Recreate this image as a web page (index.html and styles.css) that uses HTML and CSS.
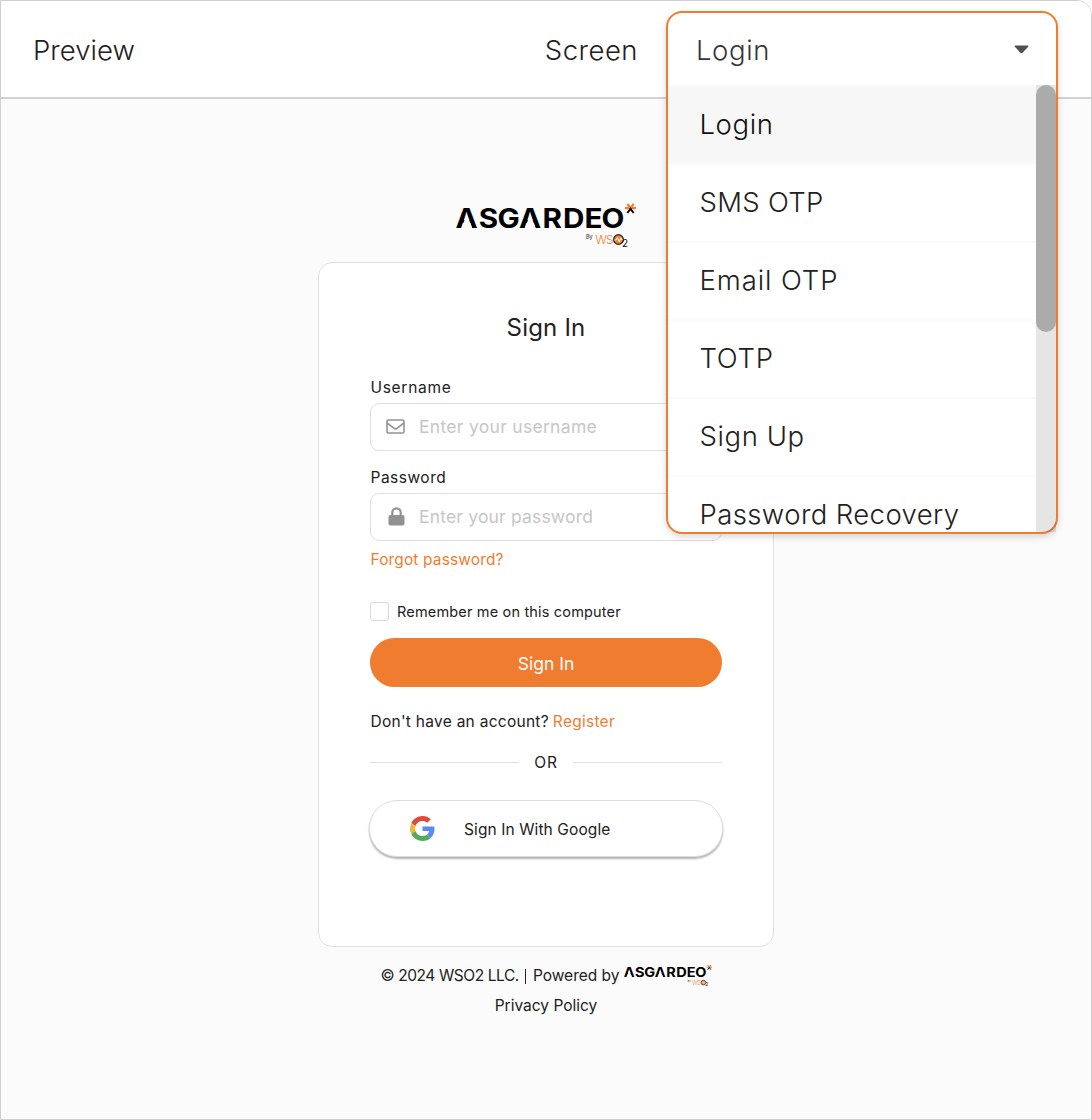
FILE: index.html
```html
<!DOCTYPE html>
<html lang="en">
<head>
<meta charset="utf-8">
<title>Preview</title>
<link rel="stylesheet" href="styles.css">
</head>
<body>
<div class="frame">
  <header class="bar">
    <h1 class="bar-title">Preview</h1>
    <div class="bar-right">
      <span class="bar-label">Screen</span>
      <div class="select-slot">
        <div class="select">
          <div class="select-value"><span>Login</span>
            <svg class="caret" width="15" height="9" viewBox="0 0 15 9"><path fill="#4f4f4f" d="M1.300.500h12.400c.8 0 1 .7.500 1.200L8.300 7.900c-.5.500-1.100.500-1.600 0L.8 1.700C.300 1.200.500.500 1.300.500z"/></svg>
          </div>
          <div class="menu">
            <ul class="options">
              <li class="option selected">Login</li>
              <li class="option sms">SMS OTP</li>
              <li class="option email">Email OTP</li>
              <li class="option totp">TOTP</li>
              <li class="option signup">Sign Up</li>
              <li class="option recovery">Password Recovery</li>
            </ul>
            <div class="track"><div class="thumb"></div></div>
          </div>
        </div>
      </div>
    </div>
  </header>
  <main class="page">
    <svg class="logo" width="180" height="46" viewBox="0 0 180 46">
      <g id="logo">
        <text class="logo-word" transform="scale(1.12 1)" y="25.8" x="-.4 20.3 37.1 56.3 77.2 95.5 114.7 130">ASGARDEO</text>
        <path class="logo-gap" d="M10.200 13.500H11.400L16.200 26.300H5.400ZM73.700 13.500H74.900L79.700 26.300H68.900Z"/>
        <path class="logo-star" d="M169 6.200H180M171.300 1.800L174.500 6.200L177.700 1.800"/>
        <path class="logo-star-foot" d="M171.300 11L174.500 6.800L177.700 11"/>
        <text class="logo-by" x="130" y="37">By</text>
        <text class="logo-wso" x="139.300" y="42.300">WS</text>
        <circle class="logo-ring" cx="162.500" cy="37.500" r="4.800"/>
        <path class="logo-pulse" d="M158.500 38h1.700l1.300-2.500 1.800 4.500 1.500-4.200.9 2h1"/>
        <text class="logo-two" x="166" y="44.800">2</text>
      </g>
    </svg>
    <section class="card">
      <h2 class="heading">Sign In</h2>
      <label class="label label-user">Username</label>
      <div class="field">
        <svg class="envelope" width="19" height="15" viewBox="0 0 19 15"><rect x="1" y="1" width="17" height="13" rx="1.400"/><path d="M1 4l6.800 5.200c1 .8 2.400.8 3.400 0L18 4"/></svg>
        <span class="ph-user">Enter your username</span>
      </div>
      <label class="label label-pass">Password</label>
      <div class="field">
        <svg class="lock" width="17" height="19" viewBox="0 0 17 19"><rect x=".5" y="8" width="16" height="10.500" rx="2" fill="#919191"/><path d="M4.300 9V5.500a4.200 4.200 0 0 1 8.400 0V9" fill="none" stroke="#919191" stroke-width="2.200"/></svg>
        <span class="ph-pass">Enter your password</span>
      </div>
      <a class="forgot">Forgot password?</a>
      <div class="remember"><span class="box"></span><span class="remember-text">Remember me on this computer</span></div>
      <button class="submit">Sign In</button>
      <p class="register"><span>Don't have an account?</span><a>Register</a></p>
      <div class="or"><span>OR</span></div>
      <button class="google">
        <svg width="25" height="25" viewBox="0 0 48 48"><path fill="#dd4b3e" d="M24 9.500c3.540 0 6.710 1.220 9.210 3.600l6.850-6.850C35.900 2.380 30.470 0 24 0 14.620 0 6.510 5.380 2.560 13.220l7.980 6.190C12.430 13.720 17.740 9.500 24 9.500z"/><path fill="#5a8bf0" d="M46.980 24.550c0-1.570-.15-3.090-.38-4.550H24v9.020h12.940c-.58 2.960-2.260 5.480-4.780 7.180l7.730 6c4.510-4.180 7.090-10.360 7.090-17.650z"/><path fill="#efb73e" d="M10.530 28.590c-.48-1.450-.76-2.990-.76-4.590s.27-3.140.76-4.590l-7.980-6.190C.92 16.460 0 20.120 0 24c0 3.880.92 7.540 2.560 10.780l7.970-6.190z"/><path fill="#55aa58" d="M24 48c6.480 0 11.930-2.130 15.890-5.810l-7.730-6c-2.150 1.450-4.920 2.300-8.160 2.300-6.260 0-11.570-4.220-13.470-9.910l-7.980 6.190C6.510 42.620 14.620 48 24 48z"/></svg>
        <span>Sign In With Google</span>
      </button>
    </section>
    <footer class="footer">
      <div class="copy"><span class="rights">© 2024 WSO2 LLC.</span><i class="sep"></i><span>Powered by</span><svg class="logo-small" width="88" height="23" viewBox="0 0 180 46"><use href="#logo"/></svg></div>
      <a class="privacy">Privacy Policy</a>
    </footer>
  </main>
</div>
</body>
</html>
```
FILE: styles.css
```css
* { box-sizing: border-box; }
body { margin: 0; background: #fbfbfb; font-family: Inter, "Liberation Sans", sans-serif; font-size: 15.5px; line-height: 20px; color: #212121; }
h1, h2, p, ul { margin: 0; padding: 0; font-weight: 400; }
button { font: inherit; color: inherit; border: 0; padding: 0; }
.frame { height: 1120px; border: 1px solid #cfcfcf; border-top-right-radius: 15px; overflow: hidden; display: flex; flex-direction: column; }
.bar { height: 98px; flex: none; background: #fff; border-bottom: 2px solid #d2d2d2; display: flex; justify-content: space-between; align-items: center; padding: 4px 33px 0 32px; font-size: 27.5px; line-height: 34px; font-weight: 300; }
.bar-title { margin-bottom: 2px; font-size: 27.5px; font-weight: 300; letter-spacing: .05px; }
.bar-label { margin-bottom: 2px; letter-spacing: .5px; }
.bar-right { display: flex; align-items: center; gap: 28px; }
.select-slot { width: 392px; height: 76px; margin-bottom: 4px; position: relative; }
.select { position: absolute; z-index: 2; top: 0; left: 0; width: 392px; height: 523px; border: 2px solid #f07c30; border-radius: 16px; background: #fff; box-shadow: 0 3px 7px rgba(0, 0, 0, .15); }
.select-value { height: 72px; display: flex; align-items: center; justify-content: space-between; padding: 2px 27px 0 28px; color: #363636; letter-spacing: .6px; }
.caret { margin-top: -1px; }
.menu { height: 447px; display: flex; overflow: hidden; }
.options { flex: 1; list-style: none; font-weight: 300; }
.option { height: 78px; border-top: 2px solid #fafafa; padding: 20px 0 0 31.5px; }
.selected { background: #f7f7f7; color: #111; letter-spacing: .6px; }
.sms { letter-spacing: .3px; }
.email { letter-spacing: .9px; }
.totp { letter-spacing: .7px; }
.signup { letter-spacing: .6px; }
.recovery { letter-spacing: .4px; }
.track { width: 20px; background: rgba(0, 0, 0, .1); }
.thumb { height: 247px; border-radius: 10px; background: #ababab; }
.page { flex: 1; display: flex; flex-direction: column; align-items: center; padding-top: 103px; }
.logo { display: block; overflow: visible; }
.logo-word { font: 700 26.5px Inter, sans-serif; fill: #000; }
.logo-gap { fill: #fbfbfb; }
.logo-star { fill: none; stroke: #f47b30; stroke-width: 2.2; }
.logo-star-foot { fill: none; stroke: #000; stroke-width: 2; }
.logo-by { font: 5.5px Inter, sans-serif; fill: #222; }
.logo-wso { font: 300 12px Inter, sans-serif; letter-spacing: -.8px; fill: #f47b30; }
.logo-ring { fill: #f47b30; stroke: #222; stroke-width: 1.3; }
.logo-pulse { fill: none; stroke: #fff; stroke-width: 1; }
.logo-two { font: 10px Inter, sans-serif; fill: #111; }
.card { width: 456px; height: 685px; margin-top: 14px; padding: 50px 51px 0; background: #fff; border: 1px solid #e0e0e0; border-radius: 14px; display: flex; flex-direction: column; }
.heading { font-size: 24px; line-height: 30px; text-align: center; letter-spacing: .2px; }
.label { height: 20px; padding-left: .5px; }
.label-user { margin-top: 35px; letter-spacing: .7px; }
.label-pass { margin-top: 17px; letter-spacing: .5px; }
.field { height: 48px; margin-top: 5px; border: 1px solid #dcdedf; border-radius: 9px; display: flex; align-items: center; padding-left: 15px; gap: 14px; color: #c6c6c6; font-size: 17.5px; }
.envelope { margin-top: -1px; fill: none; stroke: #949494; stroke-width: 1.6; }
.lock { margin: -1px 0 0 2px; }
.ph-user { letter-spacing: .3px; }
.ph-pass { letter-spacing: .18px; }
.forgot { margin-top: 9px; padding-left: .5px; color: #f07c30; letter-spacing: .13px; }
.remember { margin-top: 30px; height: 22px; display: flex; align-items: center; gap: 8px; font-size: 14.5px; letter-spacing: .17px; }
.remember-text { padding-top: 2px; }
.box { width: 19px; height: 19px; border: 1px solid #dadada; border-radius: 3px; }
.submit { height: 49px; margin-top: 16px; border-radius: 25px; background: #f07c30; color: #fff; font-size: 17.5px; padding-top: 3px; }
.register { margin-top: 25px; padding-left: .5px; display: flex; gap: 4px; letter-spacing: .27px; }
.register a { color: #f07c30; }
.or { margin-top: 21px; display: flex; align-items: center; gap: 15px; letter-spacing: .8px; }
.or::before, .or::after { content: ""; flex: 1; height: 1px; margin-top: -1px; background: #dededf; }
.google { height: 57px; margin: 27px -1px 0; border-radius: 28px; background: #fff; border: 1px solid #dedede; box-shadow: 0 2px 2px rgba(0, 0, 0, .3); display: flex; align-items: center; gap: 29px; padding-left: 40px; letter-spacing: .1px; }
.google span { padding-top: 2px; }
.footer { margin-top: 17px; display: flex; flex-direction: column; align-items: center; }
.copy { height: 24px; display: flex; align-items: center; }
.rights { letter-spacing: -.42px; }
.sep { width: 1px; height: 15px; background: #222; margin: 0 6.5px; }
.logo-small { margin: -2px 0 0 4px; }
.privacy { margin-top: 8px; }
```
